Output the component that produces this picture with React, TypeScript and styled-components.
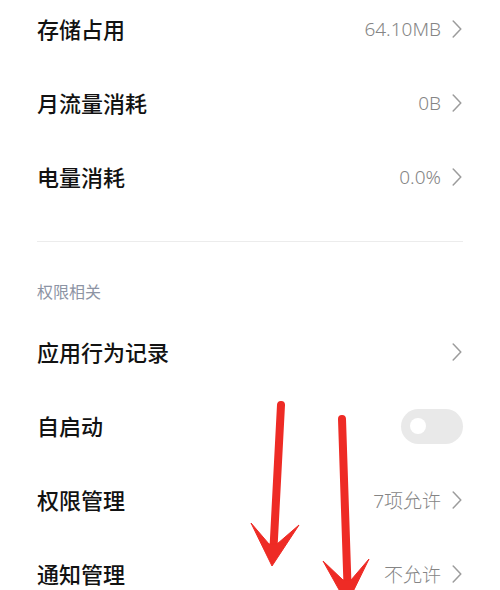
import styled, { createGlobalStyle } from "styled-components";

const GlobalStyle = createGlobalStyle`
  html, body {
    margin: 0;
    padding: 0;
    background: #ffffff;
  }
  body {
    font-family: "Noto Sans", "Noto Sans CJK SC", sans-serif;
  }
`;

const Page = styled.div`
  position: relative;
  width: 500px;
  height: 590px;
  overflow: hidden;
  background: #ffffff;
`;

const List = styled.div`
  display: flex;
  flex-direction: column;
  padding: 0 37px 0 37px;
  margin-top: -9px;
`;

const Row = styled.div`
  height: 74px;
  display: flex;
  align-items: center;
  justify-content: space-between;
`;

const Title = styled.span`
  font-family: "Noto Sans CJK SC", sans-serif;
  font-size: 22px;
  font-weight: 500;
  color: #121212;
`;

const Right = styled.div`
  display: flex;
  align-items: center;
  gap: 11px;
  padding-right: 1px;
`;

const Value = styled.span`
  font-family: "Noto Sans", "Noto Sans CJK SC", sans-serif;
  font-size: 19px;
  font-weight: 300;
  color: #858585;
  margin-top: 2px;
`;

const Divider = styled.div`
  height: 1px;
  background: #ececec;
  margin-top: 28px;
`;

const SectionHeader = styled.div`
  font-family: "Noto Sans CJK SC", sans-serif;
  font-size: 16px;
  color: #8d94a4;
  line-height: 22px;
  padding: 38px 0 12px;
`;

const Switch = styled.div<{ $on?: boolean }>`
  position: relative;
  width: 62px;
  height: 35px;
  border-radius: 18px;
  background: ${(p) => (p.$on ? "#3482ff" : "#e9e9e9")};
  margin-top: 2px;

  &::after {
    content: "";
    position: absolute;
    top: 50%;
    left: ${(p) => (p.$on ? "37px" : "9px")};
    width: 16px;
    height: 16px;
    margin-top: -8px;
    border-radius: 50%;
    background: #ffffff;
  }
`;

const Overlay = styled.svg`
  position: absolute;
  left: 0;
  top: 0;
  pointer-events: none;
`;

const Chevron = () => (
  <svg width="10" height="18" viewBox="0 0 10 18" style={{ marginTop: 2 }}>
    <polyline
      points="1.2,1 8.8,9 1.2,17"
      fill="none"
      stroke="#9c9c9c"
      strokeWidth="1.5"
      strokeLinecap="round"
      strokeLinejoin="round"
    />
  </svg>
);

type Item = { title: string; value?: string; arrow?: boolean; toggle?: boolean };

const usage: Item[] = [
  { title: "存储占用", value: "64.10MB", arrow: true },
  { title: "月流量消耗", value: "0B", arrow: true },
  { title: "电量消耗", value: "0.0%", arrow: true },
];

const permissions: Item[] = [
  { title: "应用行为记录", arrow: true },
  { title: "自启动", toggle: true },
  { title: "权限管理", value: "7项允许", arrow: true },
  { title: "通知管理", value: "不允许", arrow: true },
];

function SettingRow({ item }: { item: Item }) {
  return (
    <Row>
      <Title>{item.title}</Title>
      {item.toggle ? (
        <Switch />
      ) : (
        <Right>
          {item.value && <Value>{item.value}</Value>}
          {item.arrow && <Chevron />}
        </Right>
      )}
    </Row>
  );
}

export default function App() {
  return (
    <>
      <GlobalStyle />
      <Page>
        <List>
          {usage.map((item) => (
            <SettingRow key={item.title} item={item} />
          ))}
          <Divider />
          <SectionHeader>权限相关</SectionHeader>
          {permissions.map((item) => (
            <SettingRow key={item.title} item={item} />
          ))}
        </List>

        {/* 红色箭头标注 */}
        <Overlay width="500" height="590" viewBox="0 0 500 590">
          <g fill="#ee2b25" stroke="#ee2b25">
            <line x1="281" y1="405" x2="273.5" y2="548" strokeWidth="8" strokeLinecap="round" />
            <polygon points="251,523 272,566 299,525 277,544 269,544" strokeWidth="1" strokeLinejoin="round" />
            <line x1="342" y1="419" x2="347.5" y2="585" strokeWidth="8" strokeLinecap="round" />
            <polygon points="323,561 347,604 369,559 351,580 343,580" strokeWidth="1" strokeLinejoin="round" />
          </g>
        </Overlay>
      </Page>
    </>
  );
}
